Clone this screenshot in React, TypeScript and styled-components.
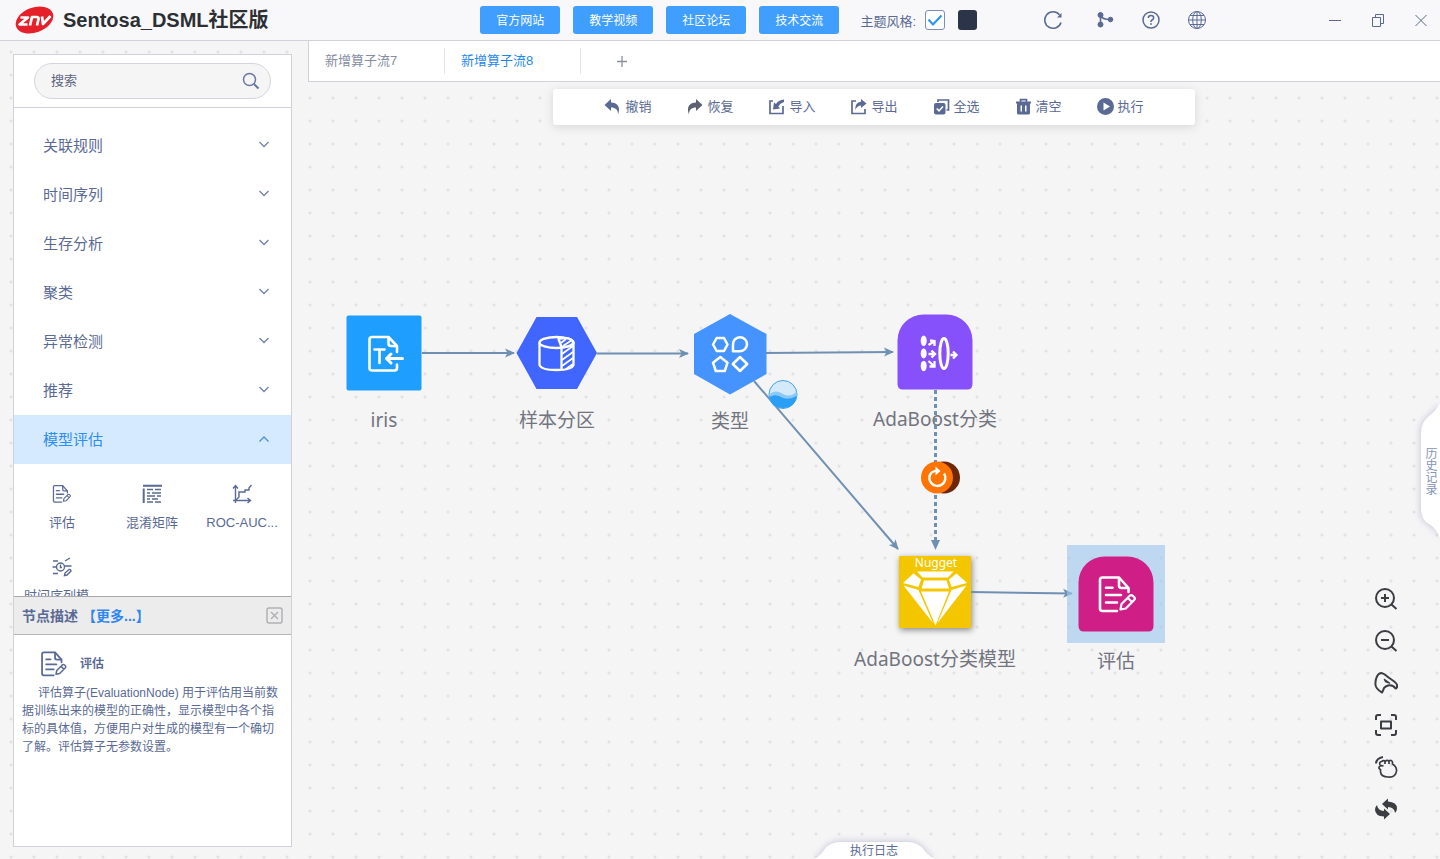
import React from 'react';
import styled, { createGlobalStyle, css } from 'styled-components';

const ink = '#5a6a94';
const line = '#cfd2d8';
const blue = '#409eff';
const uiFont = '"Liberation Sans", "Noto Sans CJK SC", sans-serif';
const nodeFont = '"Noto Sans", "Noto Sans CJK SC", sans-serif';

const GlobalStyle = createGlobalStyle`
  *, *::before, *::after { box-sizing: border-box; }
  body {
    margin: 0;
    font-family: ${uiFont};
    font-weight: 400;
    color: ${ink};
    background-color: #f5f5f6;
    background-image: radial-gradient(circle at 11px 6px, #e3e3e5 1px, transparent 2px);
    background-size: 23px 23px;
  }
  button, input { font: inherit; color: inherit; }
  button { border: 0; padding: 0; background: none; cursor: pointer; }
  svg { display: block; }
`;

const Page = styled.div`
  display: flex;
  flex-direction: column;
  height: 100vh;
  overflow: hidden;
`;

/* Header */

const Header = styled.header`
  display: flex;
  align-items: center;
  flex: none;
  height: 41px;
  padding: 0 12px 0 15px;
  background: #f8f8fb;
  border-bottom: 1px solid ${line};
`;

const Brand = styled.div`
  display: flex;
  align-items: center;
  gap: 9px;
  flex: 1;
`;

const BrandName = styled.h1`
  margin: 0;
  font-size: 20px;
  line-height: 28px;
  font-weight: 700;
  color: #2d3033;
  white-space: nowrap;
`;

const LinkRow = styled.nav`
  display: flex;
  gap: 13px;
`;

const LinkButton = styled.button`
  width: 80px;
  height: 28px;
  padding-bottom: 2px;
  border-radius: 3px;
  background: ${blue};
  color: #fff;
  font-size: 12px;
`;

const ThemeGroup = styled.div`
  display: flex;
  align-items: center;
  margin-left: 21px;
  font-size: 13px;
`;

const ThemeLabel = styled.label`
  display: flex;
  align-items: center;
  gap: 9px;
`;

const CheckWrap = styled.span`
  position: relative;
  display: block;
  width: 20px;
  height: 20px;

  input {
    appearance: none;
    display: block;
    width: 20px;
    height: 20px;
    margin: 0;
    border: 1px solid #7d8fb5;
    border-radius: 3px;
    background: #fff;
  }

  svg {
    position: absolute;
    inset: 0;
    pointer-events: none;
  }
`;

const Swatch = styled.button`
  width: 19px;
  height: 20px;
  margin-left: 13px;
  border-radius: 3px;
  background: #2b3448;
`;

const IconRow = styled.div<{ $gap: number; $before: number }>`
  display: flex;
  align-items: center;
  gap: ${(p) => p.$gap}px;
  margin-left: ${(p) => p.$before}px;
`;

const IconButton = styled.button`
  display: grid;
  place-items: center;
  flex: none;
`;

/* Left panel */

const Body = styled.div`
  display: flex;
  flex: 1;
  min-height: 0;
`;

const Sidebar = styled.aside`
  display: flex;
  flex-direction: column;
  flex: none;
  width: 279px;
  margin: 13px 16px 12px 13px;
  background: #fff;
  border: 1px solid ${line};
`;

const SearchArea = styled.div`
  flex: none;
  padding: 8px 20px;
  border-bottom: 1px solid ${line};
`;

const SearchBox = styled.label`
  display: flex;
  align-items: center;
  height: 36px;
  padding: 0 10px 0 16px;
  border: 1px solid #d3d6df;
  border-radius: 18px;
  background: #f5f5f5;

  input {
    flex: 1;
    min-width: 0;
    padding: 0 0 2px;
    border: 0;
    outline: 0;
    background: none;
    font-size: 13px;
  }

  input::placeholder { color: #5f657c; opacity: 1; }
`;

const Palette = styled.div`
  flex: 1;
  min-height: 0;
  padding-top: 13px;
  overflow: hidden;
`;

const Category = styled.button<{ $open?: boolean }>`
  display: flex;
  align-items: center;
  justify-content: space-between;
  width: 100%;
  height: 49px;
  padding: 0 21px 3px 29px;
  font-size: 15px;
  ${(p) => p.$open && css`
    background: #d5eafe;
    color: #2b8df5;
  `}
`;

const OperatorGrid = styled.div`
  display: grid;
  grid-template-columns: repeat(3, 90px);
  grid-auto-rows: 73px;
  padding: 20px 3px 0;
`;

const Operator = styled.button`
  display: flex;
  flex-direction: column;
  align-items: center;
  gap: 9px;
  font-size: 13px;
  line-height: 20px;
  white-space: nowrap;
`;

const Description = styled.section`
  flex: none;
`;

const DescriptionHead = styled.header`
  display: flex;
  align-items: center;
  height: 39px;
  padding: 0 8px;
  background: #ececec;
  border-top: 1px solid #a9a9ad;
  border-bottom: 1px solid #b5b5b8;
  font-size: 14px;
  font-weight: 700;

  h2 { margin: 0 4px 2px 0; font-size: 14px; }
  a { flex: 1; margin-bottom: 2px; color: #2f86ee; text-decoration: none; }
`;

const DescriptionBody = styled.div`
  height: 211px;
  padding: 14px 9px 0 8px;
  font-size: 12px;
  line-height: 18px;

  h3 {
    display: flex;
    align-items: center;
    gap: 12px;
    height: 30px;
    margin: 0 0 5px 18px;
    font-size: 12px;
    font-weight: 700;
  }

  p { margin: 0; text-indent: 16px; }
`;

/* Workspace */

const Workspace = styled.main`
  display: flex;
  flex-direction: column;
  flex: 1;
  min-width: 0;
`;

const TabBar = styled.div`
  display: flex;
  align-items: center;
  flex: none;
  height: 41px;
  background: #fff;
  border-left: 1px solid ${line};
  border-bottom: 1px solid ${line};
`;

const Tab = styled.button<{ $active?: boolean }>`
  width: 136px;
  height: 26px;
  padding: 0 0 4px 16px;
  border-right: 1px solid #e3e5e9;
  font-size: 13px;
  text-align: left;
  color: ${(p) => (p.$active ? '#1f87ea' : '#858d9e')};
`;

const AddTab = styled.button`
  display: grid;
  place-items: center;
  width: 81px;
  height: 40px;
`;

const Canvas = styled.div`
  position: relative;
  flex: 1;
  min-height: 0;
`;

const Toolbar = styled.div`
  display: flex;
  align-items: center;
  justify-content: center;
  gap: 35px;
  width: 642px;
  height: 36px;
  margin: 7px auto 0;
  padding-bottom: 1px;
  border-radius: 3px;
  background: #fff;
  box-shadow: 0 2px 10px rgba(60, 60, 70, 0.16);
`;

const Tool = styled.button`
  display: flex;
  align-items: center;
  gap: 4px;
  font-size: 13px;
  white-space: nowrap;

  span { padding-bottom: 2px; }
`;

const NodeBox = styled.div<{ $x: number; $y: number; $selected?: boolean }>`
  position: absolute;
  left: ${(p) => p.$x - 100}px;
  top: ${(p) => p.$y - 42}px;
  z-index: ${(p) => (p.$selected ? 3 : 1)};
  display: flex;
  flex-direction: column;
  align-items: center;
  gap: 12px;
  width: 200px;
  font-family: ${nodeFont};
  pointer-events: none;

  > svg {
    overflow: visible;
    ${(p) => p.$selected && css`
      outline: 7px solid rgba(160, 199, 238, 0.65);
      background: rgba(160, 199, 238, 0.65);
    `}
  }
`;

const NodeLabel = styled.span`
  font-size: 19px;
  line-height: 26px;
  color: #72747e;
  white-space: nowrap;
`;

const Edges = styled.svg`
  position: absolute;
  left: 0;
  top: 0;
  z-index: 2;
  width: 100%;
  height: 100%;
  pointer-events: none;
`;

const ViewTools = styled.div`
  position: absolute;
  right: 42px;
  bottom: 38px;
  z-index: 4;
  display: flex;
  flex-direction: column;
  gap: 18px;
  color: #3b3d42;
`;

const HistoryTab = styled.button`
  position: absolute;
  right: 0;
  top: 320px;
  z-index: 4;
  width: 20px;
  height: 138px;

  svg { position: absolute; inset: 0; overflow: visible; filter: drop-shadow(-1px 0 3px rgba(90, 95, 150, 0.3)); }

  span {
    position: relative;
    display: block;
    font-size: 12px;
    line-height: 20px;
    writing-mode: vertical-rl;
    margin: 0 auto;
    color: #8694b8;
  }
`;

const LogTab = styled.button`
  position: absolute;
  left: 50%;
  bottom: 0;
  z-index: 4;
  width: 124px;
  height: 18px;
  margin-left: -62px;

  svg { position: absolute; inset: 0; overflow: visible; filter: drop-shadow(0 -1px 3px rgba(90, 95, 150, 0.3)); }

  span {
    position: relative;
    display: block;
    padding-top: 2px;
    font-size: 12px;
    line-height: 16px;
  }
`;

/* Drawings */

const EvaluateGlyph = () => (
  <g fill="none" stroke="currentColor" strokeWidth="2.6" strokeLinecap="round" strokeLinejoin="round">
    <path d="M12.5-2V-6L3-16.5H-13.5Q-16-16.5-16-14V14.5Q-16 17-13.5 17H1" />
    <path d="M3-16V-8.500Q3-6 5.500-6H12" />
    <path d="M-10-6.300H-3.500M-10 1H5M-10 8.500H1" />
    <path d="M4.500 15.500L5.500 10 14 1.500Q15.500 0.500 17 2L18.300 3.300Q19.500 4.800 18.200 6L9.800 14.500ZM11.800 4L16 8" strokeWidth="2.200" />
  </g>
);

const EvaluateIcon = ({ size }: { size: number }) => (
  <svg width={size} height={size} viewBox="-19 -20 41 41">
    <EvaluateGlyph />
  </svg>
);

const MatrixIcon = () => (
  <svg width="20" height="20" viewBox="0 0 20 20" fill="none" stroke="currentColor" strokeWidth="1.500">
    <path d="M1 1.700H20M1.700 4.500V19" strokeWidth="2" />
    <path d="M5 5.500H11M13 5.500H19M5 9H8M10 9H19M5 12H13M15 12H19M5 15H8M10 15H16M5 18H11M13 18H19" />
  </svg>
);

const RocIcon = () => (
  <svg width="20" height="20" viewBox="0 0 20 20" fill="none" stroke="currentColor" strokeWidth="1.400">
    <path d="M3.500 19V2M1 4.500L3.500 1.500 6 4.500M1 16.500H18M15.500 14L18.500 16.500 15.500 19" />
    <path d="M4 16L7 13V8H13V6H17V4L19.500 1" />
  </svg>
);

const TimeEvalIcon = () => (
  <svg width="20" height="20" viewBox="0 0 20 20" fill="none" stroke="currentColor" strokeWidth="1.400">
    <circle cx="8.500" cy="10" r="4" />
    <path d="M8.500 7.500V10.500H10M1 4H6M0.500 10H4M1 16.500H6M13 4L18 1M13 9H19.500" />
    <path d="M12.500 18.500L13 16 17 12.500Q18.500 12 19 14L15 18Z" />
  </svg>
);

const Logo = () => (
  <svg width="39" height="30" viewBox="0 0 39 30">
    <ellipse cx="19.500" cy="15" rx="19.500" ry="12.500" fill="#e5202b" transform="rotate(-20 19.500 15)" />
    <g fill="none" stroke="#fff" strokeWidth="2.700" strokeLinejoin="round">
      <path d="M5.500 12.500H13L4.500 19.500H12.500" />
      <path d="M15 20.500L17 12H21.500Q24 12 23.500 14.200L22 20.500" />
      <path d="M27 11.500L28 19L35.500 11" />
    </g>
  </svg>
);

const Chevron = ({ up }: { up?: boolean }) => (
  <svg width="12" height="12" viewBox="0 0 12 12" fill="none" stroke={up ? '#4a90d9' : '#7482a8'} strokeWidth="1.300">
    <path d={up ? 'M1.500 9.500L6 5L10.500 9.500' : 'M1.500 4L6 8.500L10.500 4'} />
  </svg>
);

const toolIcons: Record<string, React.ReactNode> = {
  撤销: <path fill="currentColor" d="M7 1V4.500C13 4.500 17 8.500 14 16.500C14 11.500 11.500 9.500 7 9.500V13L0.500 7Z" />,
  恢复: <path fill="#5d6070" d="M10 1V4.500C4 4.500 0 8.500 3 16.500C3 11.500 5.500 9.500 10 9.500V13L16.500 7Z" />,
  导入: (
    <>
      <path d="M5 3H2V15.500H15V8" fill="none" stroke="currentColor" strokeWidth="1.700" />
      <path fill="currentColor" d="M16 1.500Q10 2 8 6L6 4.500L5 11.500L12 10.500L10.300 8.500Q12 5 16 4Z" />
    </>
  ),
  导出: (
    <>
      <path d="M6 3H2V15.500H15V11" fill="none" stroke="currentColor" strokeWidth="1.700" />
      <path fill="currentColor" d="M11 1L16.500 5.500L11 10V7.500Q7 7.500 5.500 12Q4.500 4.500 11 3.700Z" />
    </>
  ),
  全选: (
    <>
      <path d="M5 4V2H15.500V12H13.500" fill="none" stroke="currentColor" strokeWidth="1.700" />
      <rect x="1" y="5" width="11.500" height="11.500" rx="2" fill="currentColor" />
      <path d="M3.800 10.500L6 12.800L10 8.500" fill="none" stroke="#fff" strokeWidth="1.500" />
    </>
  ),
  清空: (
    <>
      <path d="M5.500 4V1.700H11.500V4" fill="none" stroke="currentColor" strokeWidth="1.700" />
      <path fill="currentColor" fillRule="evenodd" d="M1 3.500H16V5.500H15V15Q15 16.500 13.500 16.500H3.500Q2 16.500 2 15V5.500H1ZM5.500 7.500V13.500H7V7.500ZM10 7.500V13.500H11.500V7.500Z" />
    </>
  ),
  执行: <path fill="currentColor" fillRule="evenodd" d="M8.500 0A8.500 8.500 0 1 0 8.500 17A8.500 8.500 0 1 0 8.500 0ZM6.500 4.500L13 8.500L6.500 12.500Z" />,
};

const ReadTextGlyph = () => (
  <>
    <rect x="-37.500" y="-37.500" width="75" height="75" rx="2" fill="#1e9fff" />
    <g fill="none" stroke="#fff" strokeWidth="2.600" strokeLinecap="round" strokeLinejoin="round">
      <path d="M13-1V-7L4.500-16H-12Q-14.500-16-14.500-13.500V15Q-14.500 17.500-12 17.500H10.500Q13 17.500 13 15V11.500" />
      <path d="M4.500-15.500V-9.500Q4.500-7 7-7H12.500" />
      <path d="M-9.500-3.500H0.500M-4.500-3.500V10" />
      <path d="M18.500 5.500H2.500M7 1L2.500 5.500L7 10" strokeWidth="3" />
    </g>
  </>
);

const PartitionGlyph = () => (
  <>
    <path d="M-40.500 0L-20.500-36H20L40 0L20 36H-20.500Z" fill="#4166ff" />
    <g fill="none" stroke="#fff" strokeWidth="2.300" strokeLinejoin="round">
      <ellipse cx="-0.500" cy="-10.500" rx="17" ry="5.500" />
      <path d="M-17.500-10.500V12Q-16 17-0.500 17Q15 17 16.500 12V-10.500M4.500-5V17" />
      <path d="M4.500-6L1.500-14Q14-17 16.500-10Q13-6 4.500-6Z" fill="#4166ff" />
      <path d="M4-10L9-14M6-7L15-13M5 1L16-7M5 7L16-1M5 13L16 5M9 16L16 11" strokeWidth="1.800" />
    </g>
  </>
);

const TypeGlyph = () => (
  <>
    <path d="M0-40L36.500-20V20L0 40.500L-36 20V-20Z" fill="#4593ff" />
    <g fill="none" stroke="#fff" strokeWidth="2.500" strokeLinejoin="round">
      <path d="M-17-9.500L-13.300-16H-6L-2.500-9.500L-6-3H-13.300Z" />
      <path d="M3-2.800V-9.500A7 7 0 1 1 10-2.800Z" />
      <path d="M-9.700 3L-2.500 8.700L-5.200 17H-14.200L-17 8.700Z" />
      <path d="M10 3L17.200 10L10 17L2.800 10Z" />
    </g>
  </>
);

const AdaBoostGlyph = () => (
  <>
    <path d="M-37.500-11.500A26 26 0 0 1-11.500-37.500H11.500A26 26 0 0 1 37.500-11.500V32Q37.500 37.500 32 37.500H-32Q-37.500 37.500-37.500 32Z" fill="#8650fb" />
    <g fill="#fff">
      <ellipse cx="-11.300" cy="-11.300" rx="3" ry="5.300" />
      <ellipse cx="-11.300" cy="1.500" rx="3" ry="5" />
      <ellipse cx="-11.300" cy="14" rx="3" ry="5.300" />
    </g>
    <g fill="none" stroke="#fff" strokeWidth="2.300">
      <ellipse cx="9" cy="1.500" rx="4.200" ry="15" strokeWidth="3" />
      <path d="M-6.500-7L-1-10.500M-5-11.500L-0.500-11V-6M-6.500 2H-1M-3.500-1.500L0 2L-3.500 5.500M-6.500 9L-1 14M-0.500 9V14.500H-5.500M15.500 3H21M18-0.500L21.500 3L18 6.500" />
    </g>
  </>
);

const NuggetGlyph = () => (
  <>
    <rect x="-36" y="-36" width="72" height="72" rx="1" fill="#f4c600" style={{ filter: 'drop-shadow(1px 2px 3px rgba(60, 60, 60, .6))' }} />
    <text x="1" y="-25" textAnchor="middle" fontSize="12" fontWeight="400" fill="#fff">Nugget</text>
    <g fill="#fff">
      <path d="M-18-20.500H18.500L13-14.500H-12.500Z" />
      <path d="M-21.500-18.500L-14-12.500L-16.500-5L-32-9Z" />
      <path d="M21.500-18.500L14-12.500L16.500-5L32-9Z" />
      <path d="M-11-11.500H11.500L14-3.500H-13.500Z" />
      <path d="M-31.500-6.500L-16.500-2L-2 31Z" />
      <path d="M31.500-6.500L16.500-2L2.500 31Z" />
      <path d="M-14-0.500H14L0.500 33.500Z" />
    </g>
  </>
);

const EvaluateNodeGlyph = () => (
  <>
    <path d="M-37.500-11.500A26 26 0 0 1-11.500-37.500H11.500A26 26 0 0 1 37.500-11.500V32Q37.500 37.500 32 37.500H-32Q-37.500 37.500-37.500 32Z" fill="#cf1f86" />
    <g color="#fff"><EvaluateGlyph /></g>
  </>
);

const nodes = [
  { label: 'iris', x: 76, y: 271, glyph: <ReadTextGlyph /> },
  { label: '样本分区', x: 249, y: 271, glyph: <PartitionGlyph /> },
  { label: '类型', x: 422, y: 272, glyph: <TypeGlyph /> },
  { label: 'AdaBoost分类', x: 627, y: 270, glyph: <AdaBoostGlyph /> },
  { label: 'AdaBoost分类模型', x: 627, y: 510, glyph: <NuggetGlyph /> },
  { label: '评估', x: 808, y: 512, glyph: <EvaluateNodeGlyph />, selected: true },
];

const categories = ['关联规则', '时间序列', '生存分析', '聚类', '异常检测', '推荐'];

const EdgeLayer = () => (
  <Edges>
    <defs>
      <marker id="arrow" viewBox="0 0 10 10" refX="9" refY="5" markerWidth="10" markerHeight="10" markerUnits="userSpaceOnUse" orient="auto">
        <path d="M0 0.500L10 5L0 9.500L2.500 5Z" fill="#6f90b3" />
      </marker>
    </defs>
    <g fill="none" stroke="#6f90b3" strokeWidth="2">
      <path d="M114 271H206" markerEnd="url(#arrow)" />
      <path d="M289 271.500H380" markerEnd="url(#arrow)" />
      <path d="M458 271L585 270" markerEnd="url(#arrow)" />
      <path d="M446 299L590 467" markerEnd="url(#arrow)" />
      <path d="M627.500 308V460" strokeWidth="3" strokeDasharray="4 3" />
      <path d="M663 510L764 511.500" markerEnd="url(#arrow)" />
    </g>
    <path d="M623 458H632L627.500 468Z" fill="#6f90b3" />
    <circle cx="475" cy="312.500" r="14" fill="#d3eafa" stroke="#3fa3ee" />
    <path d="M461.500 312Q468 307 475 312Q482 316 488.500 310V314Q486 326 475 326Q463 325 461.500 312Z" fill="#8cc8f5" />
    <path d="M461.500 315Q468 311 475 316Q482 318 488.500 314Q487 326 475 326Q463 326 461.500 315Z" fill="#2b9ff5" />
    <circle cx="636" cy="395.500" r="16" fill="#6e2608" />
    <circle cx="629" cy="395.500" r="16" fill="#ff7403" />
    <path d="M623.500 390.500A8 8 0 1 0 636 391.500" fill="none" stroke="#fff" strokeWidth="2.400" />
    <path d="M627.500 384.500L632.500 389L627.500 393.500Z" fill="#fff" />
    <path d="M623.500 390.500L628 388.500" stroke="#fff" strokeWidth="2.400" />
  </Edges>
);

const viewTools: [string, React.ReactNode][] = [
  ['放大', <><circle cx="11" cy="11" r="9" /><path d="M17.500 17.500L22.500 22M7 11H15M11 7V15" /></>],
  ['缩小', <><circle cx="11" cy="11" r="9" /><path d="M17.500 17.500L22.500 22M7 11H15" /></>],
  ['鹰眼', <>
    <path d="M8 21.500C5.500 20 2 18 1.500 14C1 9 3 2.500 7 2C10 2 13 5.500 16 7.500C19.500 10 23 12 23 14C23.500 16 22.500 17.500 21.500 17.500C20 15 17 14 14 14.500C11.500 15.500 9.500 17 9.500 18.500Z" />
    <path d="M10.500 8.500L15.500 12L11.500 10.500Z" strokeWidth="1.500" />
  </>],
  ['适应屏幕', <path d="M2 7V4Q2 2 4 2H7M17 2H20Q22 2 22 4V7M22 17V20Q22 22 20 22H17M7 22H4Q2 22 2 20V17M7 8.500H17V15.500H7Z" />],
  ['拖动', <>
    <path d="M2 8.500Q2.500 3 9 2" />
    <path d="M6 10Q5 7 7.500 6.500Q10 5 11 6.500Q13 4.500 15 6Q17.500 4.500 18.500 7V9Q23 12 22.500 16C22 20 19 22.500 14 22C10 22 7 20 6.500 17V14.500Q4 13.500 5.500 11.500Q7 10 9.500 11M11 7V9M15 6.500V9" strokeWidth="1.700" />
  </>],
  ['刷新画布', <g fill="currentColor" stroke="none">
    <path d="M8 7L14 1.500V4.500Q23 5 23 11.500Q23 14 21 16Q20.500 10.500 14 10V12.500Z" />
    <path d="M16 17L10 22.500V19.500Q1 19 1 12.500Q1 10 3 8Q3.500 13.500 10 14V11.500Z" />
  </g>],
];

export default function App() {
  return (
    <>
      <GlobalStyle />
      <Page>
        <Header>
          <Brand>
            <Logo />
            <BrandName>Sentosa_DSML社区版</BrandName>
          </Brand>
          <LinkRow>
            {['官方网站', '教学视频', '社区论坛', '技术交流'].map((t) => (
              <LinkButton key={t}>{t}</LinkButton>
            ))}
          </LinkRow>
          <ThemeGroup>
            <ThemeLabel>
              主题风格:
              <CheckWrap>
                <input type="checkbox" defaultChecked />
                <svg width="20" height="20" viewBox="0 0 20 20" fill="none" stroke="#2f95f5" strokeWidth="2.200">
                  <path d="M3.500 9.500L8 14.500L16.500 5.500" />
                </svg>
              </CheckWrap>
            </ThemeLabel>
            <Swatch aria-label="深色主题" />
          </ThemeGroup>
          <IconRow $gap={0} $before={66}>
            <IconButton aria-label="刷新">
              <svg width="20" height="20" viewBox="0 0 20 20" fill="none" stroke="currentColor" strokeWidth="1.600">
                <path d="M18 12.500A8.300 8.300 0 1 1 16.500 4.700" />
                <path d="M18.500 3V7.500H14Z" fill="currentColor" stroke="none" />
              </svg>
            </IconButton>
          </IconRow>
          <IconRow $gap={26} $before={32}>
            <IconButton aria-label="流程">
              <svg width="20" height="20" viewBox="0 0 20 20" fill="currentColor" stroke="currentColor">
                <circle cx="5.500" cy="5" r="2.500" />
                <circle cx="5.500" cy="14.500" r="2.500" />
                <circle cx="15.500" cy="9.500" r="2.300" />
                <path d="M5.500 5V14M6 5.500Q7 9.500 15 9.500" fill="none" strokeWidth="1.600" />
              </svg>
            </IconButton>
            <IconButton aria-label="帮助">
              <svg width="20" height="20" viewBox="0 0 20 20" fill="none" stroke="currentColor" strokeWidth="1.500">
                <circle cx="10" cy="10" r="8" />
                <path d="M7.300 8Q7.300 5.500 10 5.500Q12.700 5.500 12.700 7.800Q12.700 9.200 11 10Q10 10.500 10 12" />
                <circle cx="10" cy="14" r="0.500" fill="currentColor" strokeWidth="1" />
              </svg>
            </IconButton>
            <IconButton aria-label="语言">
              <svg width="20" height="20" viewBox="0 0 20 20" fill="none" stroke="currentColor" strokeWidth="1">
                <circle cx="10" cy="10" r="8.500" />
                <ellipse cx="10" cy="10" rx="4.300" ry="8.500" />
                <path d="M10 1.500V18.500M1.500 10H18.500M3 5.500H17M3 14.500H17" />
              </svg>
            </IconButton>
          </IconRow>
          <IconRow $gap={29} $before={121}>
            <IconButton aria-label="最小化">
              <svg width="14" height="14" viewBox="0 0 14 14" fill="none" stroke="currentColor">
                <path d="M1 7.500H13" />
              </svg>
            </IconButton>
            <IconButton aria-label="还原">
              <svg width="14" height="14" viewBox="0 0 14 14" fill="none" stroke="currentColor">
                <path d="M1.500 4.500H9.500V13.500H1.500ZM4.500 4V1.500H12.500V10.500H10" />
              </svg>
            </IconButton>
            <IconButton aria-label="关闭">
              <svg width="14" height="14" viewBox="0 0 14 14" fill="none" stroke="currentColor">
                <path d="M1.500 2L12.500 13M12.500 2L1.500 13" />
              </svg>
            </IconButton>
          </IconRow>
        </Header>

        <Body>
          <Sidebar>
            <SearchArea>
              <SearchBox>
                <input type="text" placeholder="搜索" aria-label="搜索" />
                <svg width="18" height="18" viewBox="0 0 18 18" fill="none" stroke="#6a76a5" strokeWidth="1.500">
                  <circle cx="7.500" cy="7.500" r="6" />
                  <path d="M12 12L16.500 16.500" strokeWidth="2" />
                </svg>
              </SearchBox>
            </SearchArea>
            <Palette>
              {categories.map((c) => (
                <Category key={c}>
                  {c}
                  <Chevron />
                </Category>
              ))}
              <Category $open>
                模型评估
                <Chevron up />
              </Category>
              <OperatorGrid>
                <Operator><EvaluateIcon size={20} />评估</Operator>
                <Operator><MatrixIcon />混淆矩阵</Operator>
                <Operator><RocIcon />ROC-AUC...</Operator>
                <Operator><TimeEvalIcon />时间序列模...</Operator>
              </OperatorGrid>
            </Palette>
            <Description>
              <DescriptionHead>
                <h2>节点描述</h2>
                <a href="#more">【更多...】</a>
                <IconButton aria-label="关闭描述">
                  <svg width="17" height="17" viewBox="0 0 17 17" fill="none" stroke="#b3b0b5" strokeWidth="1.500">
                    <rect x="1" y="1" width="15" height="15" rx="2" />
                    <path d="M5 5L12 12M12 5L5 12" />
                  </svg>
                </IconButton>
              </DescriptionHead>
              <DescriptionBody>
                <h3><EvaluateIcon size={28} />评估</h3>
                <p>评估算子(EvaluationNode) 用于评估用当前数据训练出来的模型的正确性，显示模型中各个指标的具体值，方便用户对生成的模型有一个确切了解。评估算子无参数设置。</p>
              </DescriptionBody>
            </Description>
          </Sidebar>

          <Workspace>
            <TabBar role="tablist">
              <Tab role="tab">新增算子流7</Tab>
              <Tab role="tab" aria-selected $active>新增算子流8</Tab>
              <AddTab aria-label="新增">
                <svg width="12" height="12" viewBox="0 0 12 12" fill="none" stroke="#8b909b">
                  <path d="M6 1V12M1 6.500H11" strokeWidth="1.300" />
                </svg>
              </AddTab>
            </TabBar>
            <Canvas>
              <Toolbar role="toolbar">
                {Object.entries(toolIcons).map(([name, icon]) => (
                  <Tool key={name}>
                    <svg width="17" height="17" viewBox="0 0 17 17">{icon}</svg>
                    <span>{name}</span>
                  </Tool>
                ))}
              </Toolbar>
              {nodes.map((n) => (
                <NodeBox key={n.label} $x={n.x} $y={n.y} $selected={n.selected}>
                  <svg width="84" height="84" viewBox="-42 -42 84 84">{n.glyph}</svg>
                  <NodeLabel>{n.label}</NodeLabel>
                </NodeBox>
              ))}
              <EdgeLayer />
              <ViewTools>
                {viewTools.map(([name, icon]) => (
                  <IconButton key={name} aria-label={name}>
                    <svg width="24" height="24" viewBox="0 0 24 24" fill="none" stroke="currentColor" strokeWidth="2" strokeLinejoin="round">{icon}</svg>
                  </IconButton>
                ))}
              </ViewTools>
              <HistoryTab>
                <svg width="20" height="138" viewBox="0 0 20 138">
                  <path d="M20 1Q17 8 9 14Q1 20 1 31V107Q1 118 9 122Q17 127 20 136Z" fill="#fff" />
                </svg>
                <span>历史记录</span>
              </HistoryTab>
              <LogTab>
                <svg width="124" height="18" viewBox="0 0 124 18">
                  <path d="M1 18Q8 16 12 9Q18 1 28 1H96Q106 1 112 9Q118 16 123 18Z" fill="#fff" />
                </svg>
                <span>执行日志</span>
              </LogTab>
            </Canvas>
          </Workspace>
        </Body>
      </Page>
    </>
  );
}
